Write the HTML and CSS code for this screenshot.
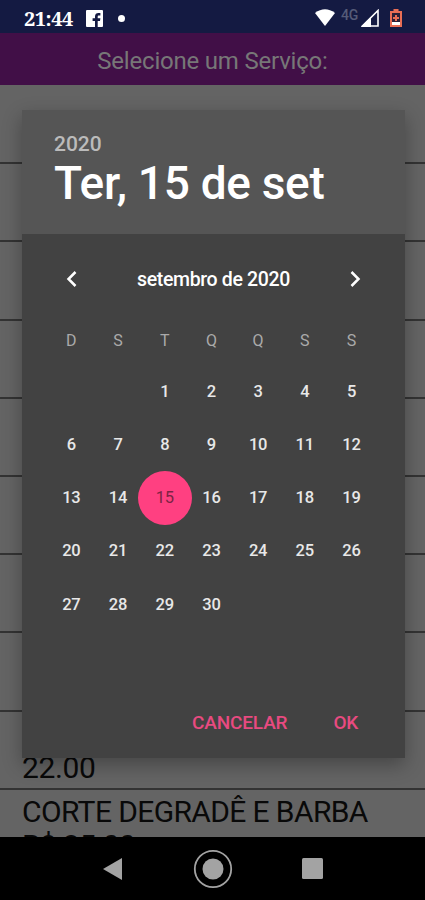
FILE: index.html
```html
<!DOCTYPE html>
<html lang="pt-BR">
<head>
<meta charset="utf-8">
<title>Selecione um Serviço</title>
<link rel="stylesheet" href="styles.css">
</head>
<body>
<div class="screen">
  <header class="status">
    <span class="clock">21:44</span>
    <svg class="fb" width="17" height="17" viewBox="0 0 17 17"><rect width="17" height="17" rx="1" fill="#fff"/><path d="M9 17v-6H6.600V8.200H9V6.500C9 4 10.400 3 12.400 3h2v2.600H13c-1 0-1.300.4-1.300 1.300v1.300h2.700L14 11h-2.300v6z" fill="#141a42"/></svg>
    <span class="dot"></span>
    <svg class="wifi" width="20" height="17" viewBox="0 0 20 17"><path d="M0 4Q10-3.500 20 4L10 17z" fill="#fff"/></svg>
    <span class="net">4G</span>
    <svg class="signal" width="18" height="18" viewBox="0 0 18 18"><path d="M17 1.500V17H1.500z" fill="none" stroke="#fff" stroke-width="1.600"/><path d="M0 18 10 8v10z" fill="#fff"/></svg>
    <svg class="battery" width="12" height="18" viewBox="0 0 12 18"><path d="M3.500 0h5v2H12v16H0V2h3.500z" fill="#e86e55"/><path d="M2 4h8v9H2z" fill="#2b2036"/><path d="M5 6h2v2h2v2H7v2H5v-2H3V8h2z" fill="#e86e55"/><path d="M2 13h8v3H2z" fill="#fff"/></svg>
  </header>
  <div class="title">Selecione um Serviço:</div>
  <main class="list">
    <div class="row"></div><div class="row"></div><div class="row"></div>
    <div class="row"></div><div class="row"></div><div class="row"></div>
    <div class="row"></div><div class="row"></div>
    <div class="row price"><span>22.00</span></div>
    <div class="row last"><span class="service">CORTE DEGRADÊ E BARBA</span><span class="cut">R$ 35.00</span></div>
  </main>
  <nav class="nav">
    <svg width="19" height="22" viewBox="0 0 19 22"><path d="M0 11 19 0v22z" fill="#a3a3a3"/></svg>
    <svg width="40" height="40" viewBox="0 0 40 40"><circle cx="20" cy="20" r="18.200" fill="none" stroke="#a3a3a3" stroke-width="1.800"/><circle cx="20" cy="20" r="10.500" fill="#a3a3a3"/></svg>
    <svg width="21" height="21" viewBox="0 0 21 21"><rect width="21" height="21" rx="1.500" fill="#a3a3a3"/></svg>
  </nav>
  <section class="dialog">
    <div class="head">
      <div class="year">2020</div>
      <div class="date">Ter, 15 de set</div>
    </div>
    <div class="month">
      <svg width="12" height="18" viewBox="0 0 12 18"><path d="M9.500 2 2.500 9l7 7" fill="none" stroke="#fff" stroke-width="2.500"/></svg>
      <span class="month-name">setembro de 2020</span>
      <svg width="12" height="18" viewBox="0 0 12 18"><path d="m2.500 2 7 7-7 7" fill="none" stroke="#fff" stroke-width="2.500"/></svg>
    </div>
    <div class="week"><span>D</span><span>S</span><span>T</span><span>Q</span><span>Q</span><span>S</span><span>S</span></div>
    <div class="days">
      <span></span><span></span><span>1</span><span>2</span><span>3</span><span>4</span><span>5</span>
      <span>6</span><span>7</span><span>8</span><span>9</span><span>10</span><span>11</span><span>12</span>
      <span>13</span><span>14</span><span class="selected">15</span><span>16</span><span>17</span><span>18</span><span>19</span>
      <span>20</span><span>21</span><span>22</span><span>23</span><span>24</span><span>25</span><span>26</span>
      <span>27</span><span>28</span><span>29</span><span>30</span>
    </div>
    <div class="actions"><span class="cancel">CANCELAR</span><span class="ok">OK</span></div>
  </section>
</div>
</body>
</html>
```
FILE: styles.css
```css
* { box-sizing: border-box; }
body { margin: 0; font-family: Roboto, "Liberation Sans", sans-serif; }
svg { display: block; flex: none; }
.screen { position: relative; width: 425px; height: 900px; overflow: hidden; display: flex; flex-direction: column; background: #000; }
.status { height: 33px; flex: none; display: flex; align-items: flex-start; background: #141a42; color: #fff; padding-left: 24px; }
.clock { width: 62px; padding-top: 6px; font: bold 20px/26px "Noto Serif", "DejaVu Serif Condensed", "Liberation Serif", serif; letter-spacing: -0.5px; }
.fb { margin-top: 10px; }
.dot { width: 7px; height: 7px; margin: 15px 0 0 15px; border-radius: 50%; background: #fff; }
.wifi { margin: 9px 0 0 190px; }
.net { width: 20px; margin: 7px 0 0 6px; font-size: 14px; line-height: 17px; font-weight: 500; letter-spacing: -0.2px; color: #555b78; }
.signal { margin: 9px 0 0 0; }
.battery { margin: 9px 0 0 11px; }
.title { height: 52px; flex: none; padding-top: 2px; text-align: center; font-size: 24px; line-height: 52px; letter-spacing: -0.2px; color: #777; background: #410f47; }
.list { flex: 1; min-height: 0; overflow: hidden; background: #646464; padding-top: 1px; }
.row { height: 78.200px; border-bottom: 2px solid #333; color: #090909; font-size: 30px; padding-left: 22px; display: flex; flex-direction: column; }
.price { justify-content: flex-end; line-height: 40px; letter-spacing: -0.4px; }
.last { line-height: 38px; padding-top: 3px; white-space: nowrap; letter-spacing: -0.62px; }
.cut { margin-top: -4px; }
.nav { height: 63px; flex: none; background: #000; display: flex; align-items: center; padding-left: 103px; gap: 71px; }
.nav svg:last-child { margin-left: -2px; }
.dialog { position: absolute; left: 22px; top: 110px; width: 383px; height: 648px; background: #424242; box-shadow: 0 7px 18px rgba(0, 0, 0, .3); }
.head { height: 124px; background: #555; padding: 20px 0 0 32px; }
.year { font-size: 21px; line-height: 28px; font-weight: 500; color: #bbb; }
.date { font-size: 46px; line-height: 50px; font-weight: 500; letter-spacing: -0.3px; color: #fff; white-space: nowrap; }
.month { display: flex; align-items: center; justify-content: space-between; height: 50px; margin-top: 20px; padding: 0 44px; color: #fff; }
.month-name { font-size: 19.500px; font-weight: 500; letter-spacing: -0.35px; }
.week, .days { display: grid; grid-template-columns: repeat(7, 46.700px); padding-left: 26px; text-align: center; }
.week { margin-top: 22px; font-size: 16px; line-height: 30px; color: #aaa; }
.days { margin-top: 8.600px; grid-auto-rows: 53.300px; line-height: 53.300px; font-size: 16.500px; font-weight: 500; letter-spacing: -0.2px; color: #e8e8e8; }
.selected { width: 54px; height: 54px; margin-left: -3.600px; border-radius: 50%; background: #ff4081; color: #7c2345; font-weight: 400; }
.actions { display: flex; padding: 73.400px 0 0 170px; gap: 46px; font-size: 19px; line-height: 38px; font-weight: 500; letter-spacing: -0.15px; color: #e84a80; }
```
